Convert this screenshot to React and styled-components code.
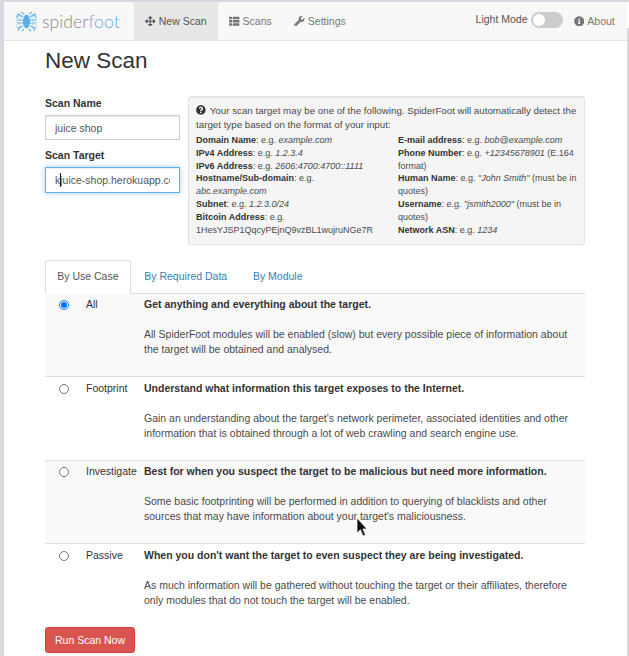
import React from "react";
import styled, { createGlobalStyle } from "styled-components";
import { FaArrowsAlt, FaThList, FaWrench, FaInfoCircle, FaQuestionCircle } from "react-icons/fa";

const Global = createGlobalStyle`
  html, body { margin: 0; padding: 0; background: #fff; }
  body { font-family: "Liberation Sans", Arial, sans-serif; font-size: 10.5px; line-height: 15px; color: #333; overflow: hidden; }
  * { box-sizing: border-box; }
`;

const Page = styled.div`
  position: relative;
  width: 629px;
  height: 656px;
  overflow: hidden;
  padding: 2px 2px 0 4px;
  background: #fff;
  box-shadow: inset 4px 0 0 #d8d8de, inset 0 2px 0 #d8d8dc;
  &::after {
    content: "";
    position: absolute;
    right: 0;
    top: 28px;
    bottom: 0;
    width: 2px;
    background: #d8d8dc;
  }
`;

const Navbar = styled.nav`
  height: 39px;
  display: flex;
  align-items: stretch;
  padding-right: 1px;
  background: #f8f8f8;
  border-bottom: 1px solid #e7e7e7;
`;
const Brand = styled.div`
  width: 130px;
  display: flex;
  align-items: center;
  gap: 5px;
  padding-left: 12px;
  font-family: Lato, "Liberation Sans", sans-serif;
  font-weight: 300;
  font-size: 17.7px;
  color: #888;
  b { font-weight: 300; color: #62aedd; }
`;
const NavItem = styled.a`
  display: flex;
  align-items: center;
  gap: 3px;
  padding: 0 11.25px;
  color: ${p => (p.$active ? "#555" : "#777")};
  background: ${p => (p.$active ? "#e7e7e7" : "transparent")};
  svg { font-size: 10.5px; }
`;
const Spacer = styled.div`flex: 1;`;
const ModeLabel = styled.span`
  align-self: center;
  color: #555;
  margin-top: -3px;
  margin-right: 3px;
`;
const Toggle = styled.span`
  align-self: center;
  width: 32px;
  height: 16px;
  border-radius: 8px;
  background: #ccc;
  padding: 2px;
  display: flex;
  margin-top: -2px;
  &::before {
    content: "";
    width: 12px;
    height: 12px;
    border-radius: 50%;
    background: #fff;
  }
`;

const Container = styled.main`
  margin: 0 42px 0 41px;
`;
const Title = styled.h2`
  margin: 0;
  padding-top: 7px;
  font-size: 22.5px;
  line-height: 25px;
  font-weight: 400;
  color: #333;
`;
const TopRow = styled.section`
  display: flex;
  gap: 8px;
  margin-top: 23px;
  height: 149px;
`;
const FormCol = styled.div`
  width: 135px;
`;
const Label = styled.label`
  display: block;
  font-weight: 700;
  margin: ${p => (p.$first ? "0" : "8px")} 0 3.75px;
`;
const Field = styled.div`
  position: relative;
`;
const TextInput = styled.input`
  display: block;
  width: 135px;
  height: 25.5px;
  padding: 0 9px;
  font: inherit;
  color: #555;
  border: 1px solid ${p => (p.$focus ? "#66afe9" : "#ccc")};
  border-radius: 0;
  outline: 0;
  background: #fff;
  box-shadow: ${p => (p.$focus ? "inset 0 1px 1px rgba(0,0,0,.075), 0 0 6px rgba(102,175,233,.6)" : "inset 0 1px 1px rgba(0,0,0,.075)")};
`;
const Caret = styled.span`
  position: absolute;
  left: 15px;
  top: 6px;
  width: 1px;
  height: 14px;
  background: #222;
`;
const Well = styled.aside`
  flex: 1;
  height: 149px;
  padding: 7px 7px 0;
  background: #f5f5f5;
  border: 1px solid #e3e3e3;
  border-radius: 3px;
  box-shadow: inset 0 1px 1px rgba(0,0,0,.05);
  font-size: 9px;
  line-height: 12.8px;
  color: #4a4a4a;
`;
const Intro = styled.p`
  margin: 0 0 2px;
  font-size: 9.75px;
  line-height: 14px;
  svg { font-size: 9.75px; color: #333; margin-right: 4px; vertical-align: -1px; }
`;
const Cols = styled.div`
  display: grid;
  grid-template-columns: 202px 1fr;
`;
const Hint = styled.div`
  b { color: #333; }
`;

const Tabs = styled.ul`
  list-style: none;
  display: flex;
  margin: 15px 0 0;
  padding: 0;
  height: 33.5px;
  border-bottom: 1.5px solid #ddd;
`;
const Tab = styled.li`
  height: 33.5px;
  padding: 8px 11.25px 0;
  margin-right: 1.25px;
  color: ${p => (p.$active ? "#555" : "#3a7db8")};
  background: ${p => (p.$active ? "#fff" : "transparent")};
  border: 1px solid ${p => (p.$active ? "#ddd" : "transparent")};
  border-bottom: ${p => (p.$active ? "1.5px solid #fff" : "0")};
  border-radius: 3px 3px 0 0;
`;
const Row = styled.div`
  display: grid;
  grid-template-columns: 41px 58px 1fr;
  height: ${p => (p.$last ? "83px" : "83.5px")};
  padding: ${p => (p.$first ? "3.5px" : "3.75px")} 6px 0 0;
  background: ${p => (p.$odd ? "#f9f9f9" : "#fff")};
  border-bottom: ${p => (p.$last ? "0" : "1px solid #ddd")};
`;
const Radio = styled.input.attrs({ type: "radio" })`
  margin: 3px 0 0 14px;
  width: 10px;
  height: 10px;
  display: block;
`;
const Name = styled.div``;
const Desc = styled.div`
  color: #4a4a4a;
  strong { color: #333; display: block; margin-bottom: 15px; }
`;
const RunButton = styled.button`
  display: block;
  width: 90px;
  height: 26px;
  padding: 0;
  font: inherit;
  color: #fff;
  background: #d9534f;
  border: 1px solid #d43f3a;
  border-radius: 3px;
`;
const Pointer = styled.svg`
  position: absolute;
  left: 356px;
  top: 518px;
`;

const rows = [
  ["All", "Get anything and everything about the target.", "All SpiderFoot modules will be enabled (slow) but every possible piece of information about the target will be obtained and analysed."],
  ["Footprint", "Understand what information this target exposes to the Internet.", "Gain an understanding about the target's network perimeter, associated identities and other information that is obtained through a lot of web crawling and search engine use."],
  ["Investigate", "Best for when you suspect the target to be malicious but need more information.", "Some basic footprinting will be performed in addition to querying of blacklists and other sources that may have information about your target's maliciousness."],
  ["Passive", "When you don't want the target to even suspect they are being investigated.", "As much information will be gathered without touching the target or their affiliates, therefore only modules that do not touch the target will be enabled."],
];

const Spider = () => (
  <svg width="21" height="21" viewBox="0 0 21 21" fill="none" stroke="#62b2e6" strokeWidth="1.2">
    <ellipse cx="10.5" cy="10.5" rx="3" ry="6.5" fill="#5aaee4" />
    <path d="M8 3 5 1M13 3l3-2M7 6 2 3 1 7M14 6l5-3 1 4M7 9H1M14 9h6M7 12H1M14 12h6M7 15l-5 2 1 3M14 15l5 2-1 3M8 18l-2 2M13 18l2 2" />
    <path d="M1 5v11M20 5v11M4 3v15M17 3v15" strokeWidth=".7" strokeDasharray="1 1" />
  </svg>
);

export default function App() {
  return (
    <Page>
      <Global />
      <Navbar>
        <Brand>
          <Spider />
          <span>spider<b>foot</b></span>
        </Brand>
        <NavItem $active><FaArrowsAlt /> New Scan</NavItem>
        <NavItem><FaThList /> Scans</NavItem>
        <NavItem><FaWrench /> Settings</NavItem>
        <Spacer />
        <ModeLabel>Light Mode</ModeLabel>
        <Toggle />
        <NavItem><FaInfoCircle /> About</NavItem>
      </Navbar>
      <Container>
        <Title>New Scan</Title>
        <TopRow>
          <FormCol>
            <Label $first>Scan Name</Label>
            <TextInput defaultValue="juice shop" />
            <Label>Scan Target</Label>
            <Field>
              <TextInput $focus defaultValue="kjuice-shop.herokuapp.com" />
              <Caret />
            </Field>
          </FormCol>
          <Well>
            <Intro><FaQuestionCircle />Your scan target may be one of the following. SpiderFoot will automatically detect the target type based on the format of your input:</Intro>
            <Cols>
              <div>
                <Hint><b>Domain Name</b>: e.g. <i>example.com</i></Hint>
                <Hint><b>IPv4 Address</b>: e.g. <i>1.2.3.4</i></Hint>
                <Hint><b>IPv6 Address</b>: e.g. <i>2606:4700:4700::1111</i></Hint>
                <Hint><b>Hostname/Sub-domain</b>: e.g.<br /><i>abc.example.com</i></Hint>
                <Hint><b>Subnet</b>: e.g. <i>1.2.3.0/24</i></Hint>
                <Hint><b>Bitcoin Address</b>: e.g.<br />1HesYJSP1QqcyPEjnQ9vzBL1wujruNGe7R</Hint>
              </div>
              <div>
                <Hint><b>E-mail address</b>: e.g. <i>bob@example.com</i></Hint>
                <Hint><b>Phone Number</b>: e.g. <i>+12345678901</i> (E.164 format)</Hint>
                <Hint><b>Human Name</b>: e.g. <i>"John Smith"</i> (must be in quotes)</Hint>
                <Hint><b>Username</b>: e.g. <i>"jsmith2000"</i> (must be in quotes)</Hint>
                <Hint><b>Network ASN</b>: e.g. <i>1234</i></Hint>
              </div>
            </Cols>
          </Well>
        </TopRow>
        <Tabs>
          <Tab $active>By Use Case</Tab>
          <Tab>By Required Data</Tab>
          <Tab>By Module</Tab>
        </Tabs>
        {rows.map(([name, head, text], i) => (
          <Row key={name} $odd={i % 2 === 0} $first={i === 0} $last={i === 3}>
            <Radio name="usecase" defaultChecked={i === 0} />
            <Name>{name}</Name>
            <Desc><strong>{head}</strong>{text}</Desc>
          </Row>
        ))}
        <RunButton>Run Scan Now</RunButton>
      </Container>
      <Pointer width="12" height="20" viewBox="0 0 12 20">
        <path d="M1 0v15l3.4-3.2L7 18l2.5-1-2.6-6H11z" fill="#111" stroke="#fff" strokeWidth=".7" />
      </Pointer>
    </Page>
  );
}
